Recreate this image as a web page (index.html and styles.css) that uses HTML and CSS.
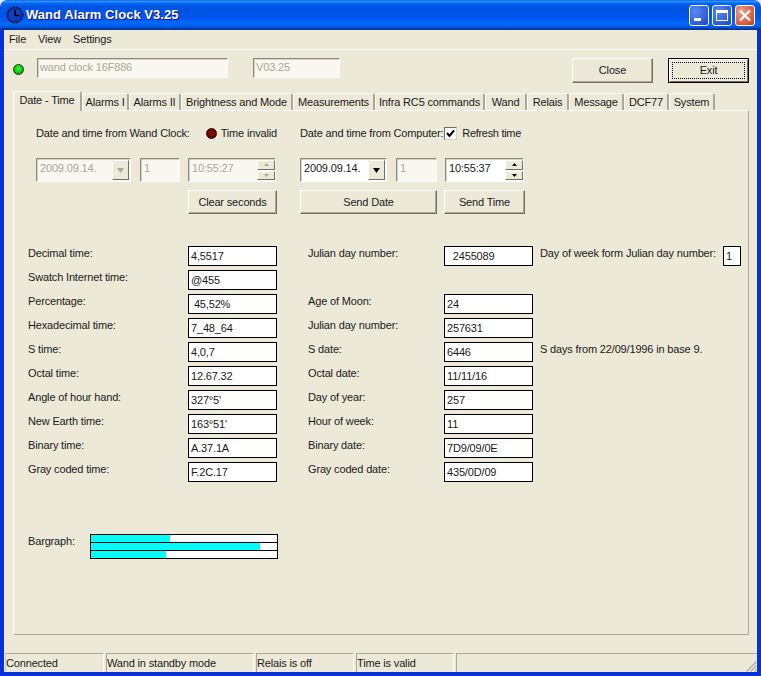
FILE: index.html
```html
<!DOCTYPE html>
<html lang="en">
<head>
<meta charset="utf-8">
<title>Wand Alarm Clock V3.25</title>
<link rel="stylesheet" href="styles.css">
</head>
<body>
<div class="window">
  <header class="titlebar">
    <svg class="app-icon" width="18" height="18" viewBox="0 0 18 18"><circle cx="9" cy="9" r="7.5" fill="#0a3fc4" stroke="#04123c" stroke-width="2" stroke-dasharray="2 1"/><path d="M9 3.500V9.500H13.500" fill="none" stroke="#000" stroke-width="1.600"/></svg>
    <span class="title-text">Wand Alarm Clock V3.25</span>
    <div class="win-buttons">
      <div class="win-btn"><svg width="20" height="21" viewBox="0 0 20 21"><rect x="5" y="13" width="7" height="3" fill="#fff"/></svg></div>
      <div class="win-btn"><svg width="20" height="21" viewBox="0 0 20 21"><path d="M4 5H16V16H4Z M5 8V15H15V8Z" fill="#fff" fill-rule="evenodd"/></svg></div>
      <div class="win-btn win-close"><svg width="20" height="21" viewBox="0 0 20 21"><path d="M5 5.500L15 15.500M15 5.500L5 15.500" stroke="#fff" stroke-width="2.400" fill="none"/></svg></div>
    </div>
  </header>
  <div class="frame">
    <nav class="menu"><span>File</span><span>View</span><span>Settings</span></nav>
    <div class="toolbar">
      <span class="led led-green"></span>
      <div class="field field-name">wand clock 16F886</div>
      <div class="field field-version">V03.25</div>
      <button class="btn btn-close" type="button">Close</button>
      <button class="btn btn-exit" type="button"><span>Exit</span></button>
    </div>
    <div class="tabs">
      <div class="tab tab-active">Date - Time</div>
      <div class="tab">Alarms I</div>
      <div class="tab">Alarms II</div>
      <div class="tab">Brightness and Mode</div>
      <div class="tab">Measurements</div>
      <div class="tab">Infra RC5 commands</div>
      <div class="tab">Wand</div>
      <div class="tab">Relais</div>
      <div class="tab">Message</div>
      <div class="tab">DCF77</div>
      <div class="tab">System</div>
    </div>
    <main class="panel">
      <section class="sync">
        <div class="group group-wand">
          <div class="heading"><span>Date and time from Wand Clock:</span><span class="status-led"><span class="led led-red"></span>Time invalid</span></div>
          <div class="controls">
            <div class="field combo combo-wand">2009.09.14.<span class="arrow"><svg width="9" height="5" viewBox="0 0 9 5"><path d="M1 0H8L4.500 5Z" fill="#aca899"/></svg></span></div>
            <div class="field num num-wand">1</div>
            <div class="field spin spin-wand">10:55:27<span class="spinner"><span><svg width="5" height="3" viewBox="0 0 5 3"><path d="M2.500 0L5 3H0Z" fill="#aca899"/></svg></span><span><svg width="5" height="3" viewBox="0 0 5 3"><path d="M0 0H5L2.500 3Z" fill="#aca899"/></svg></span></span></div>
          </div>
          <div class="actions actions-wand"><button class="btn btn-clear" type="button">Clear seconds</button></div>
        </div>
        <div class="group group-pc">
          <div class="heading"><span>Date and time from Computer:</span><span class="check"><span class="checkbox"><svg width="9" height="9" viewBox="0 0 9 9"><path d="M1 4L3.500 7L8 1.500" fill="none" stroke="#000" stroke-width="2"/></svg></span>Refresh time</span></div>
          <div class="controls">
            <div class="field combo combo-pc live">2009.09.14.<span class="arrow"><svg width="9" height="5" viewBox="0 0 9 5"><path d="M1 0H8L4.500 5Z" fill="#000"/></svg></span></div>
            <div class="field num num-pc">1</div>
            <div class="field spin spin-pc live">10:55:37<span class="spinner"><span><svg width="5" height="3" viewBox="0 0 5 3"><path d="M2.500 0L5 3H0Z" fill="#000"/></svg></span><span><svg width="5" height="3" viewBox="0 0 5 3"><path d="M0 0H5L2.500 3Z" fill="#000"/></svg></span></span></div>
          </div>
          <div class="actions"><button class="btn btn-date" type="button">Send Date</button><button class="btn btn-time" type="button">Send Time</button></div>
        </div>
      </section>
      <section class="data">
        <div class="lbl">Decimal time:</div><div class="box">4,5517</div><div class="lbl label2">Julian day number:</div><div class="box box-pre">  2455089</div><div class="note"><span class="lbl">Day of week form Julian day number:</span><span class="box box-small">1</span></div>
        <div class="lbl">Swatch Internet time:</div><div class="box">@455</div><div></div><div></div><div></div>
        <div class="lbl">Percentage:</div><div class="box box-pre"> 45,52%</div><div class="lbl label2">Age of Moon:</div><div class="box">24</div><div></div>
        <div class="lbl">Hexadecimal time:</div><div class="box">7_48_64</div><div class="lbl label2">Julian day number:</div><div class="box">257631</div><div></div>
        <div class="lbl">S time:</div><div class="box">4,0,7</div><div class="lbl label2">S date:</div><div class="box">6446</div><div class="note"><span class="lbl">S days from 22/09/1996 in base 9.</span></div>
        <div class="lbl">Octal time:</div><div class="box">12.67.32</div><div class="lbl label2">Octal date:</div><div class="box">11/11/16</div><div></div>
        <div class="lbl">Angle of hour hand:</div><div class="box">327°5'</div><div class="lbl label2">Day of year:</div><div class="box">257</div><div></div>
        <div class="lbl">New Earth time:</div><div class="box">163°51'</div><div class="lbl label2">Hour of week:</div><div class="box">11</div><div></div>
        <div class="lbl">Binary time:</div><div class="box">A.37.1A</div><div class="lbl label2">Binary date:</div><div class="box">7D9/09/0E</div><div></div>
        <div class="lbl">Gray coded time:</div><div class="box">F.2C.17</div><div class="lbl label2">Gray coded date:</div><div class="box">435/0D/09</div><div></div>
      </section>
      <section class="bargraph">
        <div class="bar-label">Bargraph:</div>
        <div class="bars">
          <div class="bar"><div class="fill" style="width:42.5%"></div></div>
          <div class="bar"><div class="fill" style="width:91%"></div></div>
          <div class="bar"><div class="fill" style="width:40.5%"></div></div>
        </div>
      </section>
    </main>
    <footer class="statusbar">
      <div class="pane pane-1">Connected</div>
      <div class="pane pane-2">Wand in standby mode</div>
      <div class="pane pane-3">Relais is off</div>
      <div class="pane pane-4">Time is valid</div>
      <div class="pane pane-5"><svg class="grip" width="12" height="12" viewBox="0 0 12 12"><path d="M11.500 1.500L1.500 11.500M11.500 5.500L5.500 11.500M11.500 9.500L9.500 11.500" stroke="#aca899" stroke-width="1.200" fill="none"/></svg></div>
    </footer>
  </div>
</div>
</body>
</html>
```

FILE: styles.css
```css
* { box-sizing: border-box; }
html, body { margin: 0; padding: 0; }
body {
  background: #ece9d8;
  font: 11px/13px "Liberation Sans", Arial, sans-serif;
  letter-spacing: -0.16px;
  color: #1a1a1a;
}
.window {
  width: 761px;
  height: 676px;
  display: flex;
  flex-direction: column;
  overflow: hidden;
  background: #ece9d8;
}
.titlebar {
  height: 30px;
  flex: none;
  display: flex;
  align-items: center;
  padding: 0 6px;
  border-radius: 7px 7px 0 0;
  background: linear-gradient(to bottom, #0058ee 0%, #3593ff 4%, #288eff 6%, #127dff 8%, #036ffc 10%, #0262ee 14%, #0057e5 20%, #0054e3 24%, #0055eb 56%, #005bf5 66%, #026afe 76%, #0062ef 86%, #0052d6 92%, #0040ab 94%, #003092 100%);
}
.app-icon { margin-right: 2px; flex: none; }
.title-text {
  color: #fff;
  font: bold 13px/16px "Liberation Sans", Arial, sans-serif;
  letter-spacing: 0.05px;
  text-shadow: 1px 1px 0 #0f1089;
}
.win-buttons { margin-left: auto; display: flex; gap: 3px; }
.win-btn {
  width: 20px;
  height: 21px;
  border: 1px solid #fff;
  border-radius: 3px;
  background: radial-gradient(circle at 30% 30%, #5b8cf0, #2b55d8 75%, #1c3fb8);
  display: flex;
}
.win-btn svg { margin: -1px; flex: none; }
.win-close { background: radial-gradient(circle at 30% 30%, #e9a08a, #d95a35 70%, #b43a1c); }

.frame {
  flex: 1;
  display: flex;
  flex-direction: column;
  border: solid #0831d9;
  border-width: 0 4px 4px;
  min-height: 0;
}
.menu {
  height: 20px;
  flex: none;
  border-bottom: 1px solid #fff;
  display: flex;
  gap: 12px;
  padding: 3px 0 0 5px;
}
.toolbar {
  height: 41px;
  flex: none;
  display: flex;
  align-items: flex-start;
  padding: 8px 0 0 9px;
}
.led {
  display: inline-block;
  width: 11px;
  height: 11px;
  border-radius: 50%;
  flex: none;
}
.led-green {
  margin-top: 6px;
  background: radial-gradient(circle at 50% 40%, #30ff30, #10c010 60%, #066006);
  border: 1px solid #0c3a0c;
}
.led-red {
  margin-right: 4px;
  background: radial-gradient(circle at 50% 40%, #900c0c, #6a0606 60%, #280000);
  border: 1px solid #1c0606;
}
.field {
  height: 20px;
  background: #f8f7f0;
  color: #aca899;
  border: solid;
  border-width: 1px;
  border-color: #8e8b7e #fff #fff #8e8b7e;
  box-shadow: inset 1px 1px 0 #d6d2c2;
  padding: 2px 0 0 2px;
  white-space: nowrap;
  position: relative;
}
.field-name { width: 191px; margin-left: 13px; }
.field-version { width: 87px; margin-left: 25px; }
.btn {
  display: block;
  font: inherit;
  letter-spacing: inherit;
  color: #1a1a1a;
  background: #ece9d8;
  height: 24px;
  padding: 0;
  border: 1px solid;
  border-color: #fff #716f64 #716f64 #fff;
  box-shadow: inset -1px -1px 0 #aca899;
}
.btn-close { width: 81px; height: 25px; margin-left: auto; }
.btn-exit {
  width: 81px;
  height: 25px;
  margin-left: 15px;
  margin-right: 8px;
  border: 1px solid #000;
  box-shadow: inset 1px 1px 0 #fff, inset -1px -1px 0 #716f64;
  padding: 3px;
}
.btn-exit span {
  display: flex;
  height: 100%;
  align-items: center;
  justify-content: center;
  border: 1px dotted #000;
}
.tabs {
  height: 19px;
  flex: none;
  margin-left: 9px;
  display: grid;
  grid-template-columns: 69px 47px 52px 112px 82px 110px 42px 42px 55px 45px 46px;
  justify-content: start;
  align-items: end;
  position: relative;
}
.tab {
  height: 17px;
  border-top: 1px solid #fff;
  border-left: 1px solid #fff;
  border-right: 2px solid #aca899;
  border-radius: 3px 3px 0 0;
  text-align: center;
  line-height: 17px;
  white-space: nowrap;
}
.tab-active {
  height: 20px;
  margin-bottom: -1px;
  position: relative;
  z-index: 1;
  background: #ece9d8;
  line-height: 16px;
}
.panel {
  height: 525px;
  width: 736px;
  flex: none;
  margin-left: 9px;
  border: 1px solid;
  border-color: #fff #aca899 #aca899 #fff;
  padding: 14px 0 0 14px;
}
.sync {
  margin-left: 8px;
  display: grid;
  grid-template-columns: 241px 225px;
  column-gap: 23px;
}
.group { display: flex; flex-direction: column; }
.heading {
  height: 16px;
  display: flex;
  align-items: center;
  justify-content: space-between;
  white-space: nowrap;
}
.group-pc .heading { width: 221px; }
.status-led { display: flex; align-items: center; }
.check { display: flex; align-items: center; letter-spacing: -0.3px; }
.checkbox {
  width: 13px;
  height: 13px;
  background: #fff;
  border: 1px solid;
  border-color: #716f64 #d6d2c2 #d6d2c2 #716f64;
  margin-right: 5px;
  display: flex;
  align-items: center;
  justify-content: center;
}
.controls { display: flex; gap: 9px; margin-top: 17px; }
.controls .field { height: 24px; padding: 3px 0 0 3px; }
.controls .live { background: #fff; color: #1a1a1a; }
.combo-wand { width: 95px; }
.combo-pc { width: 87px; }
.num-wand { width: 40px; margin-right: -1px; }
.num-pc { width: 41px; margin-right: -1px; }
.spin-wand { width: 88px; }
.spin-pc { width: 79px; }
.arrow {
  position: absolute;
  right: 1px;
  top: 1px;
  bottom: 1px;
  width: 17px;
  background: #ece9d8;
  border: 1px solid;
  border-color: #fff #716f64 #716f64 #fff;
  display: flex;
  align-items: center;
  justify-content: center;
}
.spinner {
  position: absolute;
  right: 0;
  top: 1px;
  bottom: 1px;
  width: 18px;
  display: flex;
  flex-direction: column;
  gap: 1px;
}
.spinner span {
  flex: 1;
  background: #ece9d8;
  border: 1px solid;
  border-color: #fff #716f64 #716f64 #fff;
  display: flex;
  align-items: center;
  justify-content: center;
}
.actions { display: flex; gap: 7px; margin-top: 8px; }
.actions-wand { justify-content: flex-end; }
.btn-clear { width: 89px; }
.btn-date { width: 137px; }
.btn-time { width: 81px; }
.data {
  margin-top: 32px;
  display: grid;
  grid-template-columns: 160px 89px 167px 89px 208px;
  grid-auto-rows: 20px;
  row-gap: 4px;
}
.lbl { padding-top: 1px; }
.label2 { padding-left: 31px; }
.box {
  border: 1px solid #000;
  background: #fff;
  padding: 3px 0 0 2px;
  white-space: nowrap;
}
.box-pre { white-space: pre; }
.note {
  padding-left: 7px;
  display: flex;
  justify-content: space-between;
  align-items: flex-start;
  white-space: nowrap;
}
.box-small { width: 18px; height: 20px; }
.bargraph { margin-top: 52px; display: flex; }
.bar-label { width: 62px; padding-top: 1px; }
.bars {
  width: 188px;
  height: 25px;
  background: #000;
  border: 1px solid #000;
  display: flex;
  flex-direction: column;
  gap: 1px;
}
.bar { height: 7px; background: #fff; }
.fill { height: 100%; background: #00ffff; }
.statusbar {
  margin-top: 18px;
  height: 19px;
  flex: none;
  display: flex;
  gap: 2px;
  padding-left: 1px;
}
.pane {
  border-top: 1px solid #aca899;
  border-left: 1px solid #d0ccba;
  border-right: 1px solid #fff;
  padding: 3px 0 0 0;
  white-space: nowrap;
}
.pane-1 { width: 99px; }
.pane-2 { width: 148px; border-left-color: #aca899; }
.pane-3 { width: 98px; border-left-color: #aca899; }
.pane-4 { width: 98px; border-left-color: #aca899; }
.pane-5 { flex: 1; position: relative; border-left-color: #aca899; border-right: 0; }
.grip { position: absolute; right: 0; bottom: 0; }
```
